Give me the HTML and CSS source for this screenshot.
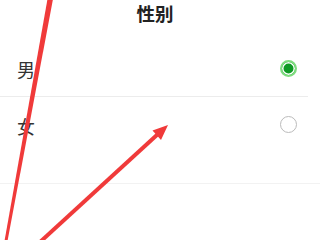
FILE: index.html
```html
<!DOCTYPE html>
<html lang="zh-CN">
<head>
    <meta charset="UTF-8">
    <meta name="viewport" content="width=device-width, initial-scale=1.0">
    <title>性别</title>

    <link rel="stylesheet" href="styles.css">
</head>
<body>
    <div id="wrap">
        <div class="header">
            <h1 class="title">性别</h1>
        </div>

        <ul class="options">
            <li class="option">
                <span class="label">男</span>
                <span class="radio checked"></span>
            </li>
            <li class="option last">
                <span class="label">女</span>
                <span class="radio"></span>
            </li>
        </ul>

        <!-- 标注箭头 -->
        <svg class="marks" width="320" height="240" viewBox="0 0 320 240">
            <polygon points="47.5,-1 53,-1 7.5,241 4.5,241" fill="#f03a3a" />
            <line x1="39" y1="243" x2="158" y2="134" stroke="#f03a3a" stroke-width="4" />
            <polygon points="168,125 161,140 152.5,130.5" fill="#f03a3a" />
        </svg>
    </div>
</body>
</html>
```

FILE: styles.css
```css
* {
    margin: 0;
    padding: 0;
}

html, body {
    width: 320px;
    height: 240px;
    background-color: #fff;
    color: #333;
    font-family: 'Noto Sans CJK SC', 'Noto Sans', sans-serif;
    overflow: hidden;
}

ul {
    list-style: none;
}

#wrap {
    position: relative;
    width: 320px;
    height: 240px;
}

.header {
    height: 40px;
    display: flex;
    justify-content: center;
    align-items: flex-start;
}

.title {
    margin-top: 2px;
    margin-left: -10px;
    font-size: 18.5px;
    line-height: 22px;
    font-weight: bold;
    color: #222;
}

.option {
    height: 56px;
    display: flex;
    justify-content: space-between;
    align-items: center;
    padding: 0 23px 0 17px;
    border-bottom: 1px solid #ececec;
    margin-right: 12px;
}

.option.last {
    height: 57px;
    padding-bottom: 29px;
    border-bottom-color: #f2f2f2;
    margin-right: 0;
    padding-right: 23px;
}

.label {
    font-size: 18px;
    line-height: 20px;
    color: #333;
}

.option:first-child .label {
    margin-top: 1px;
}

.option .radio {
    box-sizing: border-box;
    width: 17px;
    height: 17px;
    border-radius: 50%;
    border: 1.5px solid #bbb;
    margin-right: -12px;
}

.option.last .radio {
    margin-right: 0;
    margin-top: -3px;
}

.radio.checked {
    border: 2px solid #7fdc7f;
    background-color: #0f9a24;
    box-shadow: inset 0 0 0 1.5px #fff;
    margin-top: 1px;
}

.marks {
    position: absolute;
    top: 0;
    left: 0;
    pointer-events: none;
}
```
